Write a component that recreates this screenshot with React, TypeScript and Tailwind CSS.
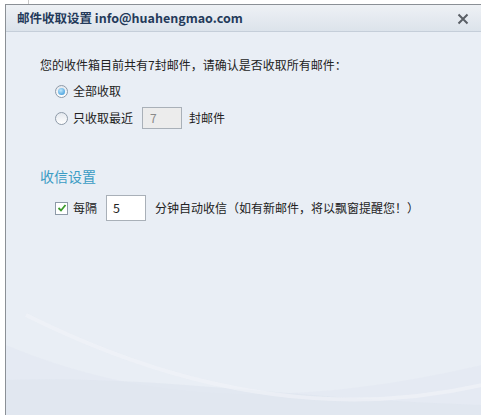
import React from 'react';

const font = { fontFamily: '"Noto Sans CJK SC", "Noto Sans", sans-serif' };

const Radio = ({ checked }: { checked?: boolean }) => (
  <span className="w-[13px] h-[13px] rounded-full border border-[#8e9aa8] bg-gradient-to-b from-[#e4e8ee] to-[#ffffff] flex items-center justify-center shrink-0">
    {checked && <span className="w-[7px] h-[7px] rounded-full bg-[radial-gradient(circle_at_40%_35%,#bfe6fb,#2a8fd6)]" />}
  </span>
);

const App = () => {
  return (
    <div className="relative w-[481px] h-[415px] bg-white pt-[4px] pl-[5px] overflow-hidden text-[#222]" style={font}>
      {/* window behind */}
      <div className="absolute left-[28px] top-0 w-px h-[4px] bg-[#c8c8c8]" />
      <div className="relative h-full border-l border-t border-[#8b9096] bg-[#e9eef5] flex flex-col overflow-hidden">
        {/* Title bar */}
        <div className="h-[27px] shrink-0 flex items-center justify-between pl-[11px] pr-[12px] bg-gradient-to-b from-[#eef1f5] to-[#dce3eb] border-b border-[#c5ced9]">
          <span className="text-[12.5px] font-bold text-[#243a5a]">邮件收取设置 info@huahengmao.com</span>
          <svg width="12" height="12" viewBox="0 0 12 12" className="mt-[1px]">
            <path d="M1.5 1.5 L10.5 10.5 M10.5 1.5 L1.5 10.5" stroke="#5a5f66" strokeWidth="2" />
          </svg>
        </div>

        {/* Background waves */}
        <svg className="absolute left-0 bottom-0" width="476" height="130" viewBox="0 0 476 130">
          <path d="M0 60 C120 110 260 130 476 80 L476 130 L0 130 Z" fill="#e2e8f1" opacity="0.6" />
          <path d="M0 95 C150 90 300 115 476 120 L476 130 L0 130 Z" fill="#dee5ee" opacity="0.6" />
          <path d="M20 30 C140 90 300 140 476 100" stroke="#f1f4f8" strokeWidth="4" fill="none" opacity="0.6" />
        </svg>

        {/* Body */}
        <div className="relative flex flex-col pl-[34px] pt-[24px] text-[12px]">
          <p className="leading-[18px]">您的收件箱目前共有7封邮件，请确认是否收取所有邮件：</p>

          <div className="flex flex-col pl-[15px] mt-[6px] gap-[5px]">
            <label className="flex items-center gap-[5px] h-[22px]">
              <Radio checked />
              <span>全部收取</span>
            </label>
            <label className="flex items-center gap-[5px] h-[22px]">
              <Radio />
              <span>只收取最近</span>
              <span className="ml-[4px] w-[40px] h-[22px] border border-[#a9b0b8] bg-[#ececec] text-[#8a8a8a] leading-[20px] pl-[7px]">7</span>
              <span className="ml-[2px]">封邮件</span>
            </label>
          </div>

          <h3 className="mt-[37px] text-[14px] leading-[20px] text-[#3b9cc4]">收信设置</h3>

          <label className="flex items-center pl-[15px] mt-[9px] h-[26px]">
            <span className="w-[13px] h-[13px] border border-[#8e9aa8] bg-white flex items-center justify-center shrink-0">
              <svg width="10" height="10" viewBox="0 0 10 10">
                <path d="M1.5 5 L4 7.5 L8.5 2" stroke="#3a9a2a" strokeWidth="1.8" fill="none" />
              </svg>
            </span>
            <span className="ml-[5px]">每隔</span>
            <span className="ml-[9px] w-[40px] h-[26px] border border-[#a9b0b8] bg-white text-[12.5px] leading-[24px] pl-[6px]">5</span>
            <span className="ml-[9px]">分钟自动收信（如有新邮件，将以飘窗提醒您！）</span>
          </label>
        </div>
      </div>
    </div>
  );
};

export default App;
